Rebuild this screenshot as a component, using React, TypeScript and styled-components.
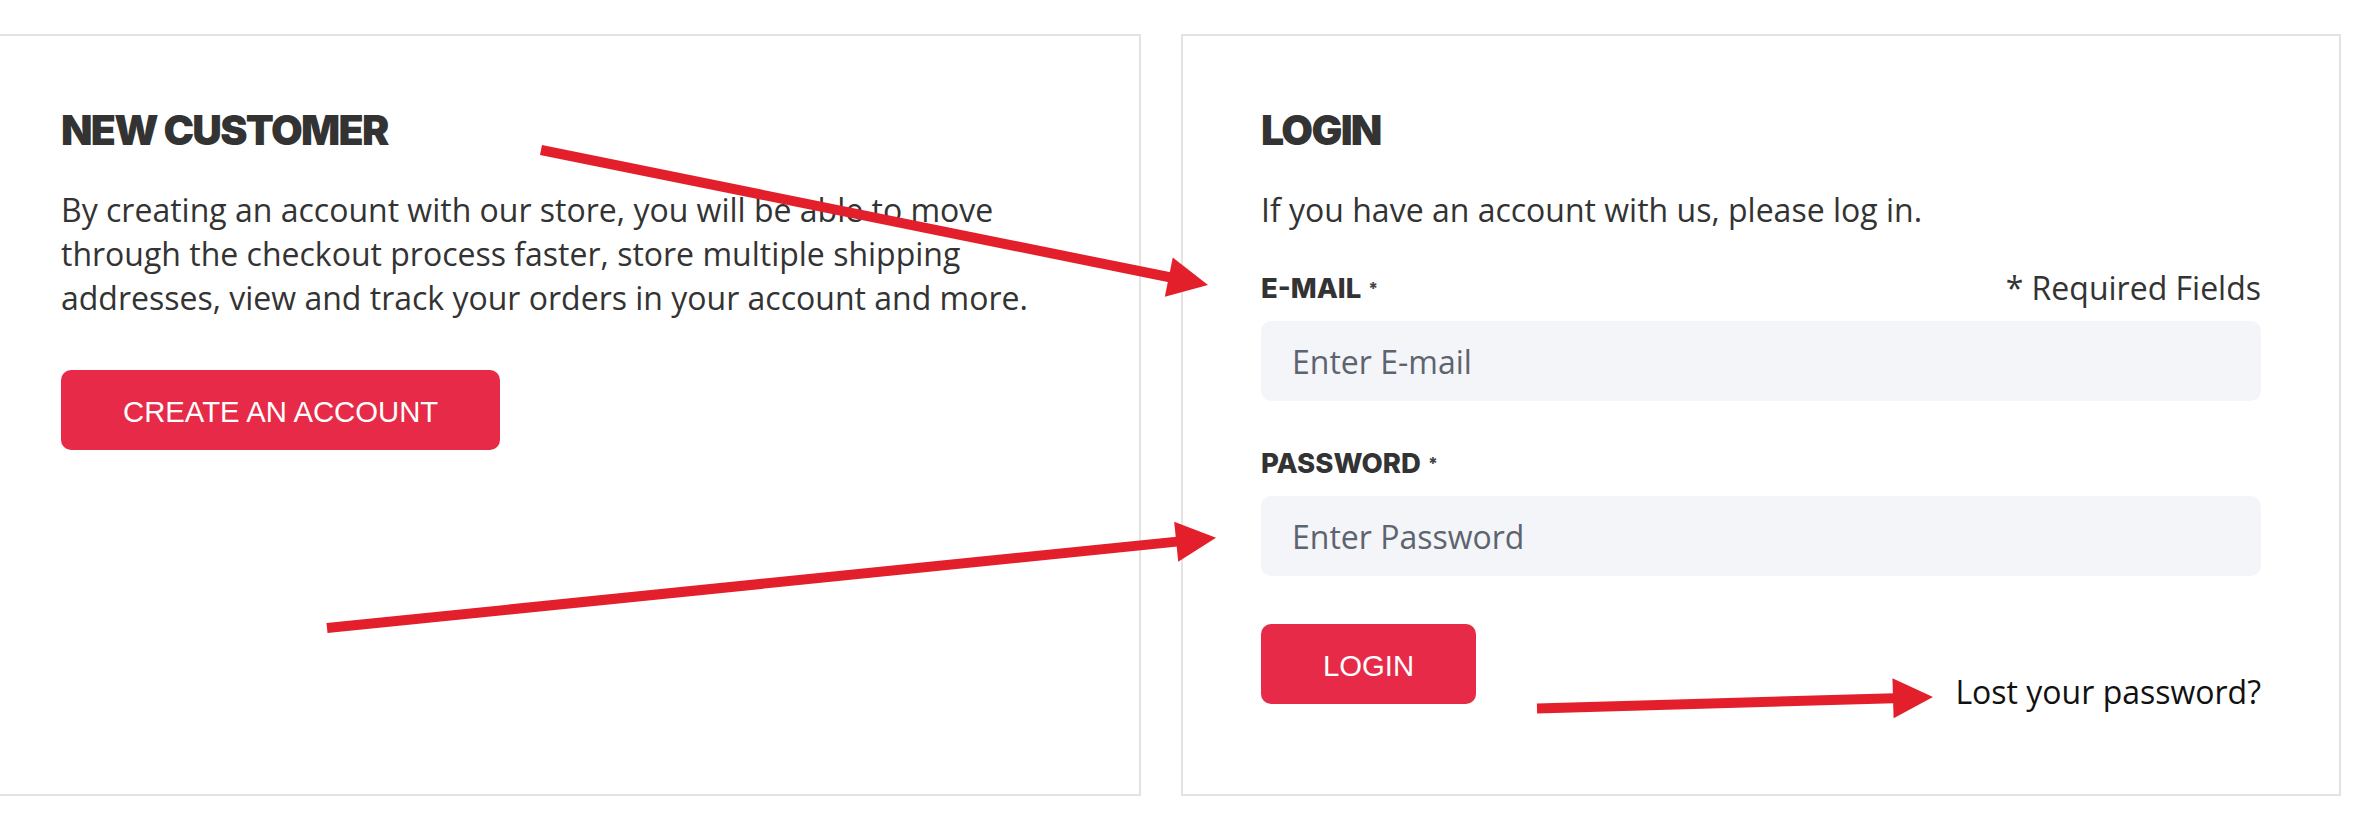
import React from 'react';
import styled, { createGlobalStyle } from 'styled-components';

const GlobalStyle = createGlobalStyle`
  html, body {
    margin: 0;
    padding: 0;
    background: #ffffff;
  }
  body {
    font-family: "Open Sans", "Noto Sans", sans-serif;
    color: #333333;
  }
  * { box-sizing: border-box; }
`;

const Screen = styled.div`
  position: relative;
  width: 2370px;
  height: 822px;
  overflow: hidden;
  background: #ffffff;
`;

const Columns = styled.div`
  display: flex;
  gap: 40px;
  margin-left: -19px;
  padding-top: 34px;
  align-items: stretch;
`;

const Panel = styled.section`
  flex: 0 0 1160px;
  width: 1160px;
  border: 2px solid #e3e3e3;
  padding: 69px 78px 90px;
  display: flex;
  flex-direction: column;
`;

const Title = styled.h2`
  margin: 0 0 33px;
  font-family: Inter, "Open Sans", sans-serif;
  font-weight: 900;
  font-size: 41px;
  line-height: 50px;
  letter-spacing: -1.7px;
  color: #333333;
  text-transform: uppercase;
`;

const Copy = styled.p`
  margin: 0;
  font-family: "Open Sans", sans-serif;
  font-size: 32px;
  line-height: 44px;
  color: #333333;
`;

const RedButton = styled.button<{ $gap?: number }>`
  align-self: flex-start;
  margin-top: ${(p) => p.$gap ?? 0}px;
  height: 80px;
  padding: 3px 62px 0;
  border: none;
  border-radius: 10px;
  background: #e72a48;
  color: #ffffff;
  font-family: "Liberation Sans", Arial, sans-serif;
  font-size: 29.3px;
  line-height: 1;
  text-transform: uppercase;
  cursor: pointer;
`;

const FieldHead = styled.div<{ $gap: number }>`
  margin-top: ${(p) => p.$gap}px;
  height: 44px;
  display: flex;
  justify-content: space-between;
  align-items: flex-start;
`;

const Label = styled.label`
  font-family: Inter, "Open Sans", sans-serif;
  font-weight: 800;
  font-size: 27.5px;
  line-height: 48px;
  margin-top: -2px;
  color: #333333;
  text-transform: uppercase;
`;

const Star = styled.span`
  margin-left: 7px;
  font-size: 17px;
  color: #444444;
  vertical-align: 3px;
`;

const Note = styled.span`
  font-family: "Open Sans", sans-serif;
  font-size: 32px;
  line-height: 44px;
  color: #333333;
`;

const Field = styled.input`
  margin-top: 11px;
  width: 100%;
  height: 80px;
  border: none;
  border-radius: 10px;
  background: #f4f5f8;
  padding: 0 31px;
  font-family: "Open Sans", sans-serif;
  font-size: 32px;
  color: #333333;
  outline: none;
  &::placeholder {
    color: #5d6470;
    opacity: 1;
  }
`;

const Actions = styled.div`
  margin-top: 48px;
  display: flex;
  justify-content: space-between;
  align-items: flex-end;
`;

const ForgotLink = styled.a`
  font-family: "Open Sans", sans-serif;
  font-size: 32px;
  line-height: 24px;
  color: #111111;
  text-decoration: none;
`;

const Annotations = styled.svg`
  position: absolute;
  left: 0;
  top: 0;
  width: 2370px;
  height: 822px;
  pointer-events: none;
`;

type ArrowProps = {
  x1: number;
  y1: number;
  x2: number;
  y2: number;
};

const ARROW_RED = '#e31f2b';

function Arrow({ x1, y1, x2, y2 }: ArrowProps) {
  const dx = x2 - x1;
  const dy = y2 - y1;
  const len = Math.hypot(dx, dy);
  const ux = dx / len;
  const uy = dy / len;
  const nx = -uy;
  const ny = ux;
  const headLen = 40;
  const headHalf = 20;
  const shaftHalf = 5;
  const bx = x2 - ux * headLen;
  const by = y2 - uy * headLen;
  const shaft = [
    [x1 + nx * shaftHalf, y1 + ny * shaftHalf],
    [bx + 1 * ux + nx * shaftHalf, by + 1 * uy + ny * shaftHalf],
    [bx + 1 * ux - nx * shaftHalf, by + 1 * uy - ny * shaftHalf],
    [x1 - nx * shaftHalf, y1 - ny * shaftHalf],
  ];
  const head = [
    [bx + nx * headHalf, by + ny * headHalf],
    [x2, y2],
    [bx - nx * headHalf, by - ny * headHalf],
  ];
  const pts = (a: number[][]) => a.map((p) => p.map((v) => v.toFixed(2)).join(',')).join(' ');
  return (
    <g fill={ARROW_RED}>
      <polygon points={pts(shaft)} />
      <polygon points={pts(head)} />
    </g>
  );
}

export default function App() {
  return (
    <>
      <GlobalStyle />
      <Screen>
        <Columns>
          <Panel>
            <Title>New Customer</Title>
            <Copy>
              By creating an account with our store, you will be able to move through the
              checkout process faster, store multiple shipping addresses, view and track your
              orders in your account and more.
            </Copy>
            <RedButton $gap={50}>Create an Account</RedButton>
          </Panel>
          <Panel>
            <Title>Login</Title>
            <Copy>If you have an account with us, please log in.</Copy>
            <FieldHead $gap={34}>
              <Label htmlFor="email">
                E-mail<Star>*</Star>
              </Label>
              <Note>* Required Fields</Note>
            </FieldHead>
            <Field id="email" type="email" placeholder="Enter E-mail" />
            <FieldHead $gap={40}>
              <Label htmlFor="password">
                Password<Star>*</Star>
              </Label>
            </FieldHead>
            <Field id="password" type="password" placeholder="Enter Password" />
            <Actions>
              <RedButton>Login</RedButton>
              <ForgotLink href="#">Lost your password?</ForgotLink>
            </Actions>
          </Panel>
        </Columns>
        <Annotations viewBox="0 0 2370 822">
          <Arrow x1={541} y1={150} x2={1208} y2={285} />
          <Arrow x1={327} y1={628} x2={1216} y2={537.7} />
          <Arrow x1={1537} y1={708.5} x2={1933} y2={697} />
        </Annotations>
      </Screen>
    </>
  );
}
